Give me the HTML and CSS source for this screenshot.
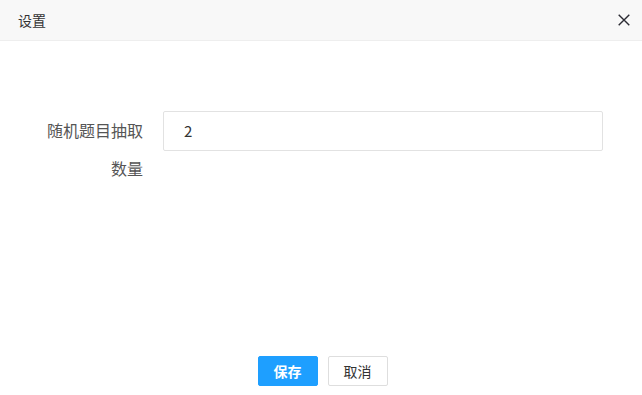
FILE: index.html
```html
<!DOCTYPE html>
<html lang="zh">
<head>
<meta charset="utf-8">
<link rel="stylesheet" href="styles.css">
</head>
<body>
<div class="dialog">
  <div class="dialog-head">
    <span class="dialog-title">设置</span>
    <span class="dialog-close">
      <svg width="12" height="12" viewBox="0 0 12 12"><path d="M0.7 0.7L11.3 11.3M11.3 0.7L0.7 11.3" stroke="#2b2b33" stroke-width="1.4" fill="none"/></svg>
    </span>
  </div>
  <div class="dialog-body">
    <div class="form-row">
      <label class="form-label">随机题目抽取数量</label>
      <div class="form-input">2</div>
    </div>
  </div>
  <div class="dialog-foot">
    <a class="btn btn-primary">保存</a>
    <a class="btn">取消</a>
  </div>
</div>
</body>
</html>
```
FILE: styles.css
```css
html, body {
  margin: 0;
  padding: 0;
  background: #fff;
  font-family: "Noto Sans CJK SC", "Noto Sans", sans-serif;
}
.dialog {
  width: 642px;
  height: 395px;
  display: flex;
  flex-direction: column;
}
.dialog-head {
  height: 40px;
  background: #f8f8f8;
  border-bottom: 1px solid #eeeeee;
  display: flex;
  align-items: center;
  justify-content: space-between;
  padding: 0 12px 0 18px;
  flex-shrink: 0;
}
.dialog-title {
  font-size: 14px;
  color: #333;
}
.dialog-close {
  display: flex;
  width: 12px;
  height: 12px;
}
.dialog-body {
  flex: 1;
  padding-top: 70px;
}
.form-row {
  display: flex;
  align-items: flex-start;
  padding-left: 42px;
}
.form-label {
  width: 101px;
  font-size: 16px;
  line-height: 38px;
  color: #555;
  text-align: right;
  margin-right: 20px;
}
.form-input {
  width: 418px;
  height: 38px;
  border: 1px solid #e2e2e2;
  border-radius: 2px;
  padding-left: 20px;
  font-size: 15px;
  line-height: 38px;
  color: #333;
}
.dialog-foot {
  display: flex;
  justify-content: center;
  gap: 10px;
  padding: 0 0 9px 3px;
}
.btn {
  box-sizing: border-box;
  width: 60px;
  height: 30px;
  border: 1px solid #dedede;
  border-radius: 2px;
  font-size: 14px;
  line-height: 28px;
  text-align: center;
  color: #333;
  background: #fff;
}
.btn-primary {
  background: #1e9fff;
  border-color: #1e9fff;
  color: #fff;
  font-weight: 600;
}
```
